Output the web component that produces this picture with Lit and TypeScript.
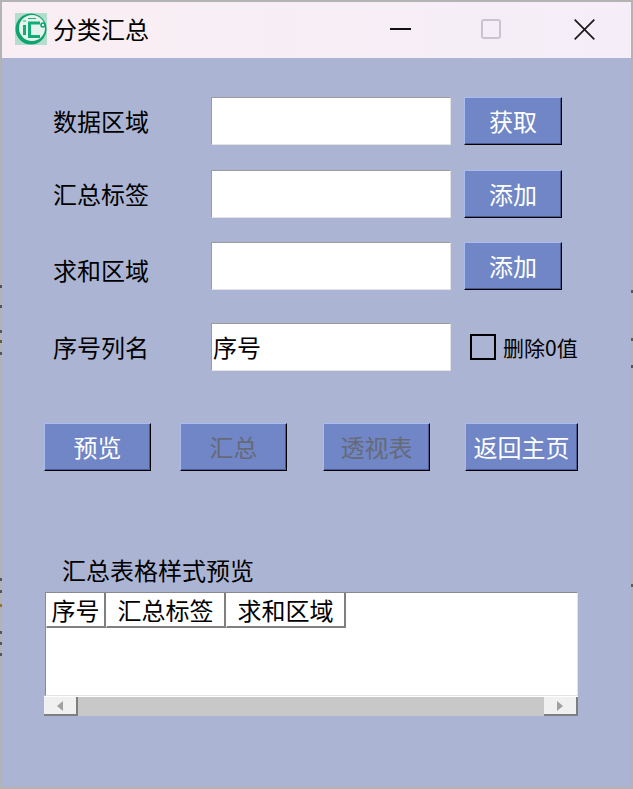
import { LitElement, html, css } from "lit";
import { customElement } from "lit/decorators.js";

const TICKS: [string, number, string][] = [
  ["l", 285, "#5a5048"], ["l", 305, "#555"], ["l", 330, "#555"], ["l", 340, "#6b5a3a"], ["l", 352, "#555"],
  ["l", 578, "#555"], ["l", 590, "#555"], ["l", 604, "#a0702a"], ["l", 631, "#555"], ["l", 642, "#555"], ["l", 653, "#555"],
  ["r", 290, "#555"], ["r", 338, "#6b5a3a"], ["r", 365, "#555"], ["r", 584, "#6b5a3a"],
];

@customElement("app-root")
export class AppRoot extends LitElement {
  static styles = css`
    :host {
      display: block;
      position: relative;
      width: 633px;
      height: 789px;
      box-sizing: border-box;
      border: 2px solid #b3b3b3;
      background: #abb5d3;
      font-family: "Noto Sans CJK SC", "Noto Sans", sans-serif;
      font-size: 24px;
      line-height: 32px;
      color: #000;
    }
    .tick { position: absolute; width: 2px; height: 3px; }
    .tick.l { left: -2px; }
    .tick.r { right: -2px; }
    .title {
      height: 56px;
      display: flex;
      align-items: center;
      background: linear-gradient(90deg, #f9eef3, #f5eef8);
      padding-left: 13px;
    }
    .logo { width: 32px; height: 32px; flex: none; display: block; margin-top: -2px; }
    .title-text { margin-left: 6px; flex: 1; padding-bottom: 3px; }
    .win { flex: none; display: block; margin-top: -2px; }
    .w-min { margin-right: 70px; }
    .w-max { margin-right: 73px; }
    .w-close { margin-right: 36px; }
    .form { padding: 39px 0 0 51px; }
    .row { display: flex; align-items: center; height: 48px; }
    .r2 { margin-top: 25px; }
    .r3 { margin-top: 24px; }
    .r4 { margin-top: 33px; }
    .label { width: 158px; flex: none; }
    .label.low { padding-top: 8px; box-sizing: border-box; }
    .input {
      width: 240px;
      height: 48px;
      box-sizing: border-box;
      background: #fff;
      border: 1px solid;
      border-color: #9b9b9b #e3e3e3 #e3e3e3 #9b9b9b;
      flex: none;
      display: flex;
      align-items: center;
      padding-left: 1px;
    }
    .btn {
      box-sizing: border-box;
      height: 48px;
      background: #7086c6;
      color: #fff;
      border: 1px solid;
      border-color: #a9bcf2 #000 #000 #a9bcf2;
      box-shadow: inset 0 -1px 0 #4a5a8c, inset -1px 0 0 #4a5a8c;
      display: flex;
      align-items: center;
      justify-content: center;
      flex: none;
    }
    .btn.dim { color: #666a78; }
    .side { width: 98px; margin-left: 13px; }
    .check {
      margin-left: 19px;
      display: flex;
      align-items: center;
      font-size: 21px;
    }
    .box {
      width: 26px;
      height: 26px;
      box-sizing: border-box;
      border: 2px solid #000;
      margin-right: 7px;
    }
    .actions {
      display: flex;
      margin: 52px 0 0 42px;
    }
    .a1 { width: 107px; }
    .a2 { width: 107px; margin-left: 29px; }
    .a3 { width: 107px; margin-left: 36px; }
    .a4 { width: 113px; margin-left: 35px; }
    .caption { margin: 83px 0 0 60px; height: 32px; line-height: 32px; }
    .table {
      margin: 6px 0 0 42px;
      width: 534px;
      height: 124px;
      display: flex;
      flex-direction: column;
    }
    .grid {
      height: 104px;
      margin-left: 1px;
      box-sizing: border-box;
      background: #fff;
      border: 1px solid;
      border-color: #8a8a8a #e3e3e3 #e3e3e3 #8a8a8a;
      display: flex;
      align-items: flex-start;
    }
    .th {
      height: 35px;
      box-sizing: border-box;
      background: #fff;
      border-right: 2px solid #7f7f7f;
      border-bottom: 2px solid #7f7f7f;
      border-left: 1px solid #fff;
      display: flex;
      align-items: center;
      justify-content: center;
      flex: none;
    }
    .c1 { width: 60px; }
    .c2 { width: 120px; }
    .c3 { width: 120px; }
    .scroll {
      height: 19px;
      background: #c8c8c8;
      display: flex;
      justify-content: space-between;
      border-top: 1px solid #fff;
    }
    .arrow {
      width: 34px;
      height: 19px;
      box-sizing: border-box;
      background: #f0f0f0;
      border-right: 2px solid #7f7f7f;
      border-bottom: 2px solid #7f7f7f;
      display: flex;
      align-items: center;
      justify-content: center;
    }
    .arrow svg { display: block; }
  `;

  render() {
    return html`
      ${TICKS.map(
        ([side, y, color]) =>
          html`<span class="tick ${side}" style="top:${y - 2}px;background:${color}"></span>`
      )}
      <div class="title">
        <svg class="logo" viewBox="0 0 32 32">
          <rect width="32" height="32" fill="#b5dccc" />
          <circle cx="16" cy="16" r="15.5" fill="#0fa36f" />
          <circle cx="17" cy="15" r="13" fill="#e6f2ee" />
          <g fill="none" stroke="#0fae76" stroke-width="3">
            <path d="M9.5 12v10" />
            <path d="M25 10h-10.500v13.500H25" />
          </g>
          <path d="M8 8h3M13 5.500h8" fill="none" stroke="#2aa77f" stroke-width="1.200" />
          <circle cx="28" cy="12" r="2" fill="#e6f2ee" stroke="#0fa36f" stroke-width="1.600" />
        </svg>
        <span class="title-text">分类汇总</span>
        <svg class="win w-min" width="21" height="2" viewBox="0 0 21 2"><rect width="21" height="2" fill="#111" /></svg>
        <svg class="win w-max" width="20" height="20" viewBox="0 0 20 20"><rect x="1" y="1" width="18" height="18" rx="2" fill="none" stroke="#c9c5cf" stroke-width="2" /></svg>
        <svg class="win w-close" width="21" height="21" viewBox="0 0 21 21"><path d="M.7.7l19.600 19.600M20.300.7L.7 20.300" fill="none" stroke="#1a1a1a" stroke-width="1.700" /></svg>
      </div>
      <div class="form">
        <div class="row"><div class="label">数据区域</div><div class="input"></div><div class="btn side">获取</div></div>
        <div class="row r2"><div class="label">汇总标签</div><div class="input"></div><div class="btn side">添加</div></div>
        <div class="row r3"><div class="label low">求和区域</div><div class="input"></div><div class="btn side">添加</div></div>
        <div class="row r4">
          <div class="label">序号列名</div>
          <div class="input">序号</div>
          <div class="check"><span class="box"></span>删除0值</div>
        </div>
      </div>
      <div class="actions">
        <div class="btn a1">预览</div>
        <div class="btn a2 dim">汇总</div>
        <div class="btn a3 dim">透视表</div>
        <div class="btn a4">返回主页</div>
      </div>
      <div class="caption">汇总表格样式预览</div>
      <div class="table">
        <div class="grid">
          <div class="th c1">序号</div>
          <div class="th c2">汇总标签</div>
          <div class="th c3">求和区域</div>
        </div>
        <div class="scroll">
          <div class="arrow"><svg width="6" height="10" viewBox="0 0 6 10"><path d="M6 0v10L0 5z" fill="#a0a0a0" /></svg></div>
          <div class="arrow"><svg width="6" height="10" viewBox="0 0 6 10"><path d="M0 0v10l6-5z" fill="#a0a0a0" /></svg></div>
        </div>
      </div>
    `;
  }
}
